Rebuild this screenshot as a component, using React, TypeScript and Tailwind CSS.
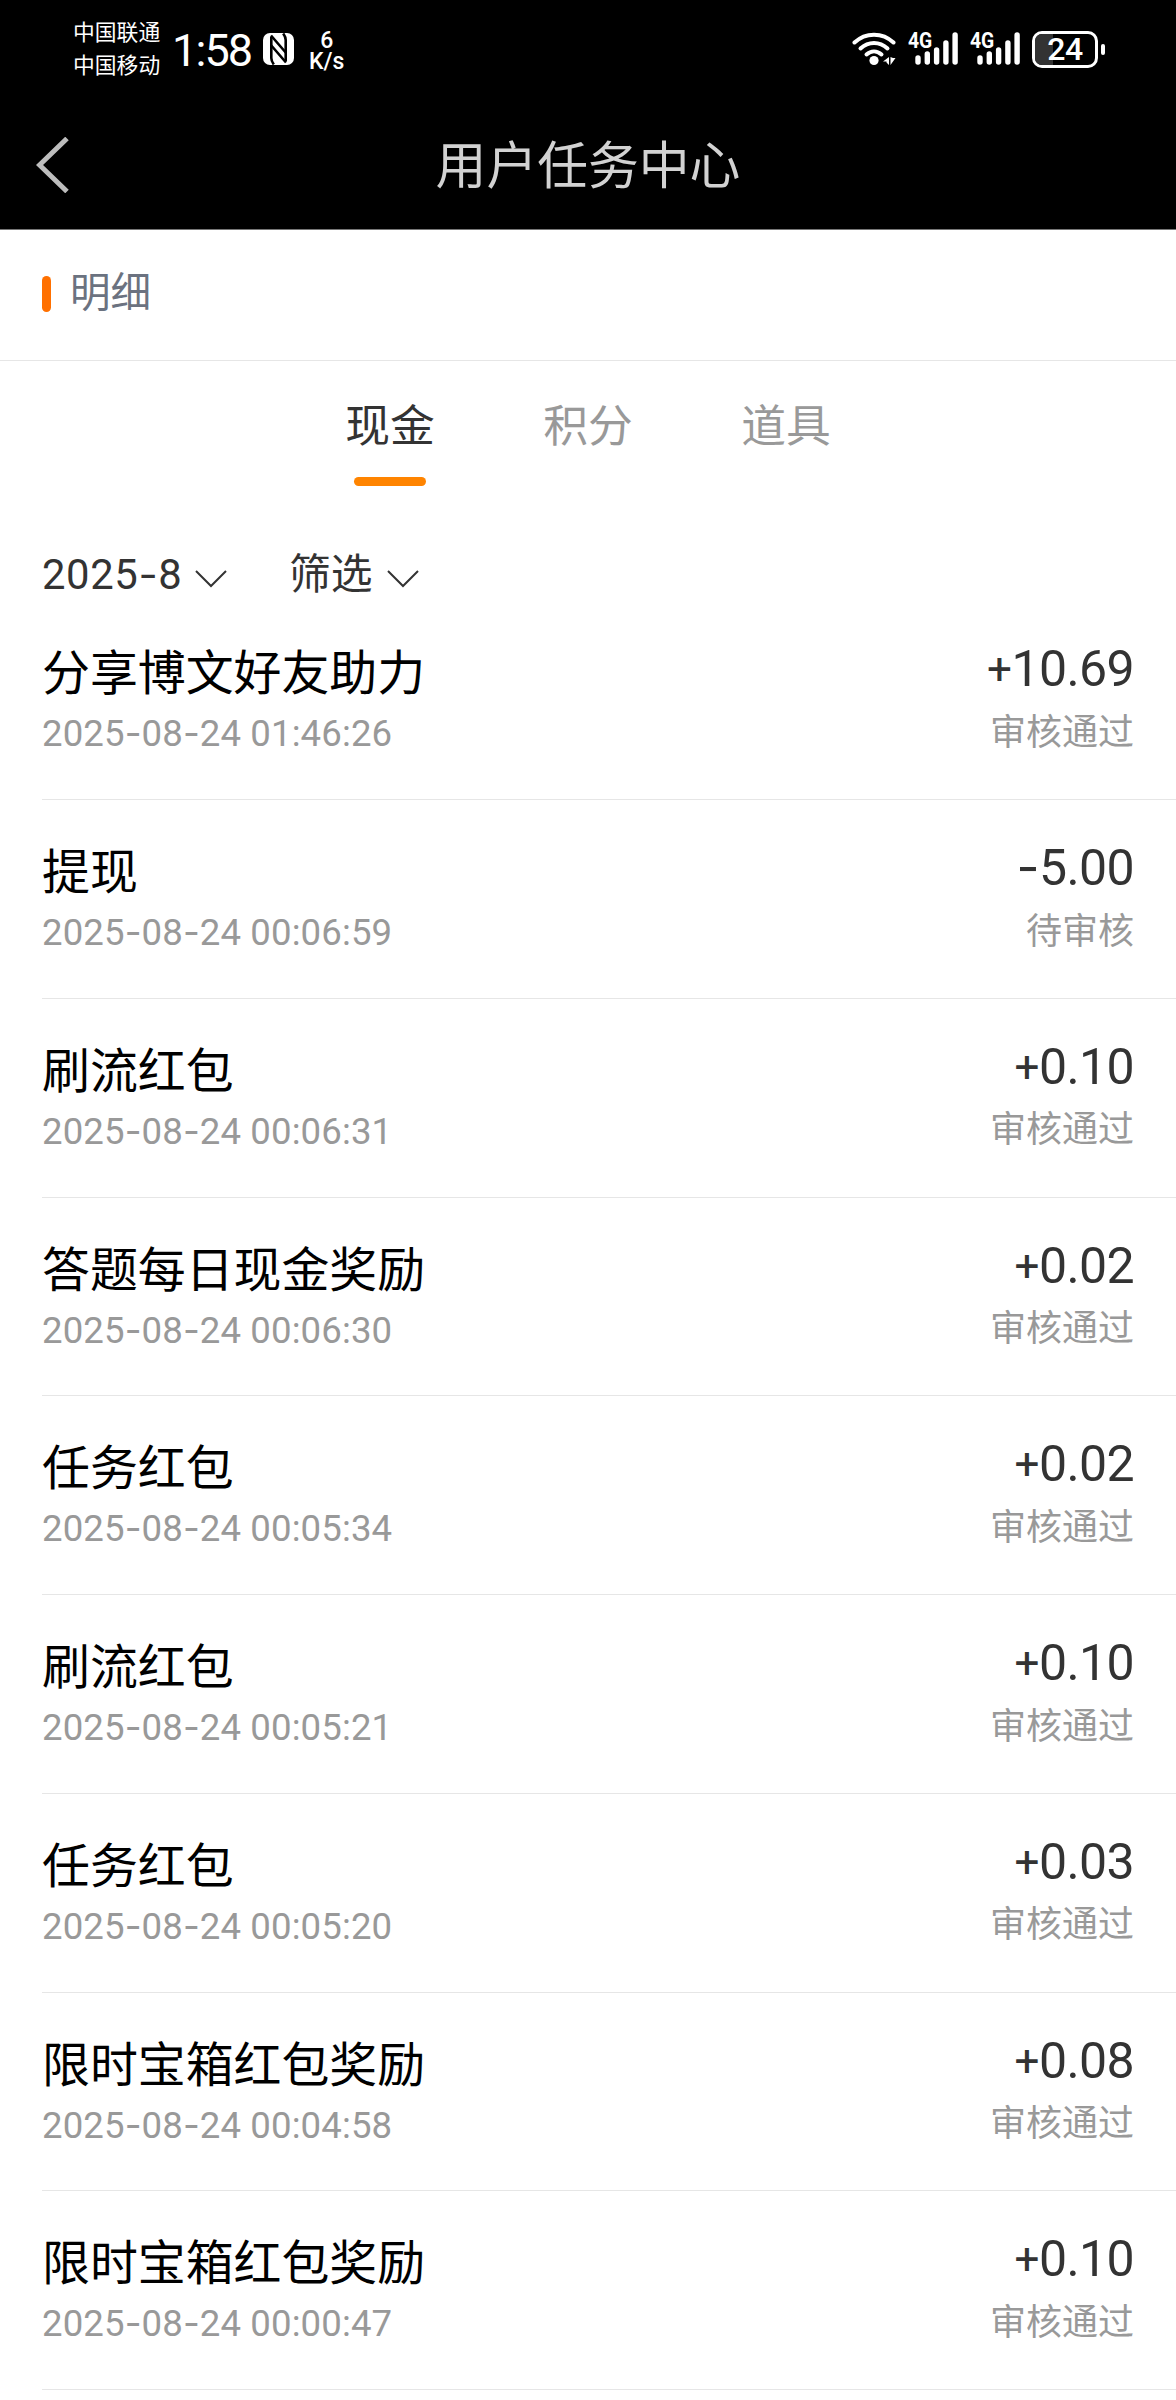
type RecordItem = {
  title: string;
  time: string;
  amount: string;
  status: string;
};

const records: RecordItem[] = [
  { title: "分享博文好友助力", time: "2025-08-24 01:46:26", amount: "+10.69", status: "审核通过" },
  { title: "提现", time: "2025-08-24 00:06:59", amount: "-5.00", status: "待审核" },
  { title: "刷流红包", time: "2025-08-24 00:06:31", amount: "+0.10", status: "审核通过" },
  { title: "答题每日现金奖励", time: "2025-08-24 00:06:30", amount: "+0.02", status: "审核通过" },
  { title: "任务红包", time: "2025-08-24 00:05:34", amount: "+0.02", status: "审核通过" },
  { title: "刷流红包", time: "2025-08-24 00:05:21", amount: "+0.10", status: "审核通过" },
  { title: "任务红包", time: "2025-08-24 00:05:20", amount: "+0.03", status: "审核通过" },
  { title: "限时宝箱红包奖励", time: "2025-08-24 00:04:58", amount: "+0.08", status: "审核通过" },
  { title: "限时宝箱红包奖励", time: "2025-08-24 00:00:47", amount: "+0.10", status: "审核通过" },
];

const tabs = ["现金", "积分", "道具"];

// The hyphen comes from Inter, where it is wide enough, and the plus is a bit smaller
const Digits = ({ text }: { text: string }) => (
  <span className="font-['Roboto'] whitespace-nowrap">
    {text.split(/([-+])/).map((part, index) => {
      if (part === "-") return <span key={index} className="font-['Inter']">-</span>;
      if (part === "+") return <span key={index} className="align-[0.04em] text-[0.88em] leading-none">+</span>;
      return part;
    })}
  </span>
);

const NfcIcon = () => (
  <svg className="block" width="31" height="32" viewBox="0 0 31 32">
    <rect x="0" y="0" width="31" height="32" rx="7" fill="#fff" />
    <g fill="none" stroke="#000" strokeWidth="2.600">
      <path d="M8.300 4V25q0 3 2.500 6.500" />
      <path d="M22.700 28V7q0-3-2.500-6.500" />
      <path d="M8 2.500L22.700 19.500M8.300 12.500L23 29.500" />
    </g>
  </svg>
);

const WifiIcon = () => (
  <svg className="block" width="44" height="36" viewBox="0 0 44 36">
    <g fill="none" stroke="#fff" strokeWidth="4" strokeLinecap="round">
      <path d="M2.500 11.500C13.500 1 30.500 1 41.500 11.500" />
      <path d="M8.500 17.500C16.500 10 27.500 10 35.500 17.500" />
      <path d="M14.500 23.500C19 19.500 25 19.500 29.500 23.500" />
    </g>
    <circle cx="22" cy="29.500" r="4.600" fill="#fff" />
    <path d="M37 26v8l-2.500-2.500v-1H31zM38.500 26l0 8 5-7h-2.500z" fill="#fff" />
  </svg>
);

const SignalIcon = () => (
  <div className="relative h-[36px] w-[50px]">
    <svg className="block" width="50" height="36" viewBox="0 0 50 36">
      <g stroke="#fff" strokeWidth="5.400" strokeLinecap="round">
        <path d="M10 27v4M19.300 23v8M28.600 19v12M37.900 12v19M47.100 4v27" />
      </g>
    </svg>
    <span className="absolute top-0 left-0 origin-left scale-x-[0.88] font-['Roboto'] text-[22px] leading-[20px] font-bold">4G</span>
  </div>
);

const BatteryIcon = () => (
  <div className="flex items-center">
    <div className="relative flex h-[37px] w-[66px] items-center justify-center rounded-[10px] border-[3px] border-white">
      <div className="absolute inset-y-0 left-0 w-[18px] rounded-l-[7px] bg-[#333]" />
      <span className="relative font-['Roboto'] text-[32px] leading-[31px] font-medium tracking-[-0.5px]">24</span>
    </div>
    <div className="ml-[3px] h-[11px] w-[4px] rounded-[2px] bg-white" />
  </div>
);

const StatusBar = () => (
  <div className="flex h-[100px] items-start text-white">
    <div className="ml-[73px] w-[87px] pt-[15px] text-[21.8px] leading-[33px] whitespace-nowrap">
      <p>中国联通</p>
      <p>中国移动</p>
    </div>
    <p className="ml-[12px] w-[91px] pt-[28px] font-['Roboto'] text-[45px] leading-[46px] tracking-[-1.9px]">1:58</p>
    <div className="pt-[33px]">
      <NfcIcon />
    </div>
    <div className="ml-[15px] pt-[30px] text-center font-['Roboto'] text-[23px] leading-[21px] font-medium">
      <p>6</p>
      <p>K/s</p>
    </div>
    <div className="mr-[71px] ml-auto flex items-start pt-[31px]">
      <WifiIcon />
      <div className="ml-[12px]">
        <SignalIcon />
      </div>
      <div className="ml-[12px]">
        <SignalIcon />
      </div>
      <div className="ml-[12px]">
        <BatteryIcon />
      </div>
    </div>
  </div>
);

const NavBar = () => (
  <div className="grid h-[129px] grid-cols-[1fr_auto_1fr] items-center">
    <svg className="ml-[36px] block" width="34" height="56" viewBox="0 0 34 56">
      <path d="M31 1.500L3.500 28l27.500 26.500" fill="none" stroke="#bdbdbd" strokeWidth="5" />
    </svg>
    <h1 className="pt-px text-[50.8px] leading-[60px] text-[#d2d2d2]">用户任务中心</h1>
  </div>
);

const DownArrow = () => (
  <svg className="block" width="32" height="18" viewBox="0 0 32 18">
    <path d="M1 1l15 15L31 1" fill="none" stroke="#333" strokeWidth="2" />
  </svg>
);

const RecordRow = ({ item }: { item: RecordItem }) => (
  <li className="ml-[42px] flex h-[198.75px] justify-between border-b border-[#e6e6e6] pr-[42px]">
    <div className="pt-[41px]">
      <p className="text-[47.9px] leading-[60px] text-black">{item.title}</p>
      <p className="mt-[5px] text-[36.6px] leading-[50px] tracking-[0.1px] text-[#999]">
        <Digits text={item.time} />
      </p>
    </div>
    <div className="pt-[36px] text-right">
      <p className="text-[50px] leading-[60px] tracking-[-0.6px] text-[#333]">
        <Digits text={item.amount} />
      </p>
      <p className="mt-[7.5px] text-[36px] leading-[50px] text-[#999]">{item.status}</p>
    </div>
  </li>
);

const App = () => {
  return (
    <div className="h-[2400px] w-[1176px] overflow-hidden bg-white font-['Noto_Sans','Noto_Sans_CJK_SC',sans-serif]">
      <header className="h-[230px] border-b border-[#777] bg-black">
        <StatusBar />
        <NavBar />
      </header>

      <div className="flex h-[131px] items-center border-b border-[#e6e6e6] pb-[3px] pl-[42px]">
        <span className="h-[36px] w-[9px] rounded-full bg-[#ff7000]" />
        <h2 className="ml-[19px] pb-[4px] text-[40.6px] leading-[50px] text-[#6b7280]">明细</h2>
      </div>

      <div className="flex h-[129px] justify-center gap-[110px] pt-[34px]">
        {tabs.map((tab, index) => (
          <div key={tab} className="flex w-[88px] flex-col items-center whitespace-nowrap">
            <span className={index === 0 ? "text-[44.8px] leading-[60px] text-[#333]" : "text-[44.8px] leading-[60px] text-[#999]"}>
              {tab}
            </span>
            {index === 0 && <span className="mt-[22px] h-[9px] w-[72px] rounded-full bg-[#ff8400]" />}
          </div>
        ))}
      </div>

      <div className="flex h-[111.4px] pt-[54px] pl-[42px] text-[41.8px] leading-[60px] text-[#333]">
        <div className="flex w-[247px]">
          <span className="-mt-[1px] w-[140px] tracking-[0.6px]">
            <Digits text="2025-8" />
          </span>
          <span className="ml-[13px] pt-[26px]">
            <DownArrow />
          </span>
        </div>
        <div className="flex">
          <span className="-mt-[1px]">筛选</span>
          <span className="ml-[14px] pt-[26px]">
            <DownArrow />
          </span>
        </div>
      </div>

      <ul>
        {records.map((item, index) => (
          <RecordRow key={index} item={item} />
        ))}
      </ul>
    </div>
  );
};

export default App;
